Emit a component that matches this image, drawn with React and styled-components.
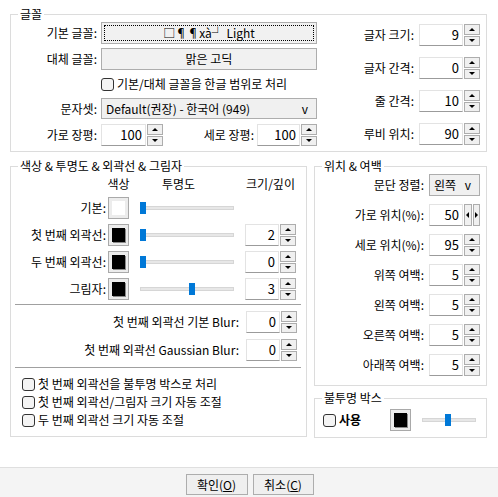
import React from "react";
import styled, { createGlobalStyle } from "styled-components";

const GlobalStyle = createGlobalStyle`
  body {
    margin: 0;
    background: #fff;
  }
`;

const Page = styled.div`
  width: 498px;
  height: 497px;
  display: flex;
  flex-direction: column;
  background: #fff;
  color: #000;
  font-family: "Noto Sans CJK KR", "Noto Sans", sans-serif;
  font-size: 12px;
  line-height: 14px;
  overflow: hidden;
`;

const Main = styled.div`
  flex: 1;
  display: flex;
  flex-direction: column;
  gap: 7px;
  padding: 7px 11px 0 10px;
`;

const Group = styled.fieldset`
  margin: 0;
  padding: 0;
  border: 1px solid #dcdcdc;
  min-width: 0;
  width: ${(p) => p.$w}px;
  box-sizing: border-box;
`;

const Legend = styled.legend`
  margin-left: 7px;
  padding: 0 2px;
  line-height: 14px;
  font-size: 12px;
`;

const Label = styled.span`
  justify-self: end;
  text-align: right;
  white-space: nowrap;
  align-self: center;
`;

/* ---------- controls ---------- */

const PushButton = styled.div`
  position: relative;
  height: 22px;
  box-sizing: border-box;
  border: 1px solid #adadad;
  background: #f1f1f1;
  display: flex;
  align-items: center;
  justify-content: center;
  white-space: nowrap;

  ${(p) =>
    p.$focused &&
    `
    &::after {
      content: "";
      position: absolute;
      inset: 2px;
      border: 1px dotted #000;
    }
  `}
`;

const Combo = styled.div`
  height: ${(p) => p.$h || 22}px;
  box-sizing: border-box;
  border: 1px solid #adadad;
  background: #f0f0f0;
  display: flex;
  align-items: center;
  justify-content: space-between;
  padding: 0 8px 0 4px;
  white-space: nowrap;
`;

const SpinWrap = styled.div`
  display: flex;
  gap: 1px;
  width: ${(p) => p.$w}px;
  height: 22px;
`;

const SpinEdit = styled.div`
  flex: 1;
  box-sizing: border-box;
  background: #fff;
  border: 1px solid #e3e3e3;
  border-bottom-color: #9b9b9b;
  text-align: right;
  padding-right: 3px;
  font-size: 13px;
  line-height: 20px;
`;

const SpinBtns = styled.div`
  display: flex;
  flex-direction: ${(p) => (p.$horizontal ? "row" : "column")};
  gap: 1px;
  width: 16px;
`;

const SpinBtn = styled.div`
  flex: 1;
  box-sizing: border-box;
  border: 1px solid #adadad;
  background: #f0f0f0;
  display: flex;
  align-items: center;
  justify-content: center;
`;

const Arrow = styled.i`
  width: 0;
  height: 0;
  border: 3px solid transparent;
  ${(p) =>
    ({
      up: "border-bottom: 3px solid #000; border-top-width: 0;",
      down: "border-top: 3px solid #000; border-bottom-width: 0;",
      left: "border-right: 3px solid #000; border-left-width: 0;",
      right: "border-left: 3px solid #000; border-right-width: 0;",
    })[p.$dir]}
`;

const Spin = ({ value, w, horizontal }) => (
  <SpinWrap $w={w}>
    <SpinEdit>{value}</SpinEdit>
    <SpinBtns $horizontal={horizontal}>
      <SpinBtn>
        <Arrow $dir={horizontal ? "left" : "up"} />
      </SpinBtn>
      <SpinBtn>
        <Arrow $dir={horizontal ? "right" : "down"} />
      </SpinBtn>
    </SpinBtns>
  </SpinWrap>
);

const CheckRow = styled.label`
  display: flex;
  align-items: center;
  gap: 3px;
  height: ${(p) => p.$h || 18}px;
  white-space: nowrap;
  font-weight: ${(p) => (p.$bold ? 700 : 400)};
`;

const Box = styled.span`
  width: 13px;
  height: 13px;
  box-sizing: border-box;
  border: 1px solid #333;
  border-radius: 3px;
  background: #f4f4f4;
  flex: none;
`;

const ColorButton = styled.div`
  width: 21px;
  height: 22px;
  box-sizing: border-box;
  border: 1px solid #a9a9a9;
  background: #ececec;
  padding: 3px;
  display: flex;
`;

const Swatch = styled.div`
  flex: 1;
  background: ${(p) => p.$color};
  box-shadow: ${(p) => (p.$color === "#fff" ? "none" : "1px 1px 0 #8a8a8a")};
`;

const SliderWrap = styled.div`
  position: relative;
  width: ${(p) => p.$w}px;
  height: 22px;
  display: flex;
  align-items: center;
`;

const Track = styled.div`
  width: 100%;
  height: 4px;
  box-sizing: border-box;
  background: #e7e7e7;
  border: 1px solid #d6d6d6;
`;

const Thumb = styled.div`
  position: absolute;
  top: 5px;
  width: 6px;
  height: 12px;
  background: #0078d7;
`;

const Slider = ({ w, pos }) => (
  <SliderWrap $w={w}>
    <Track />
    <Thumb style={{ left: pos }} />
  </SliderWrap>
);

/* ---------- font group ---------- */

const FontBody = styled.div`
  display: flex;
  padding: 1px 6px 5px 0;
`;

const FontGrid = styled.div`
  display: grid;
  grid-template-columns: 86px 216px;
  grid-template-rows: 22px 22px 20px 22px 22px;
  column-gap: 4px;
  row-gap: 4px;
`;

const PairRow = styled.div`
  display: flex;
  align-items: center;
  gap: 3px;
`;

const PairLabel = styled.span`
  flex: 1;
  text-align: right;
  white-space: nowrap;
`;

const SizeGrid = styled.div`
  margin-left: auto;
  margin-top: 2px;
  display: grid;
  grid-template-columns: auto 61px;
  grid-auto-rows: 22px;
  column-gap: 5px;
  row-gap: 11px;
`;

/* ---------- color group ---------- */

const Columns = styled.div`
  display: flex;
  gap: 7px;
`;

const SideColumn = styled.div`
  display: flex;
  flex-direction: column;
  gap: 5px;
`;

const ColorBody = styled.div`
  padding: 3px 0 6px 0;
  display: flex;
  flex-direction: column;
`;

const ColorGrid = styled.div`
  display: grid;
  grid-template-columns: 86px 21px 94px 51px;
  grid-template-rows: 16px repeat(4, 22px);
  column-gap: 11px;
  row-gap: 5px;
  & > ${Label} {
    margin-right: -9px;
  }
`;

const HeadCell = styled.span`
  grid-column: ${(p) => p.$col};
  justify-self: ${(p) => p.$align || "center"};
  padding-left: ${(p) => p.$pl || 0}px;
  white-space: nowrap;
  align-self: center;
`;

const Separator = styled.div`
  height: 1px;
  background: #a0a0a0;
  margin: ${(p) => p.$m};
`;

const BlurRows = styled.div`
  display: flex;
  flex-direction: column;
  gap: 6px;
  padding-right: 9px;
`;

const BlurRow = styled.div`
  display: flex;
  justify-content: flex-end;
  align-items: center;
  gap: 7px;
  height: 22px;
`;

const CheckList = styled.div`
  padding-left: 11px;
  display: flex;
  flex-direction: column;
`;

/* ---------- position group ---------- */

const PosGrid = styled.div`
  display: grid;
  grid-template-columns: 1fr 51px;
  grid-auto-rows: 22px;
  column-gap: 5px;
  row-gap: 8px;
  padding: 1px 6px 9px 0;
  & > :nth-child(2) {
    margin-bottom: -2px;
  }
`;

const OpaqueRow = styled.div`
  display: grid;
  grid-template-columns: 56px 21px 54px;
  column-gap: 11px;
  align-items: center;
  padding: 4px 0 6px 8px;
`;

/* ---------- footer ---------- */

const Footer = styled.div`
  height: 30px;
  box-sizing: border-box;
  border-top: 1px solid #dfdfdf;
  background: #f4f4f4;
  display: flex;
  justify-content: center;
  align-items: flex-start;
  gap: 5px;
  padding-top: 6px;
  padding-left: 1px;
`;

const DialogButton = styled.div`
  width: ${(p) => p.$w}px;
  height: 21px;
  box-sizing: border-box;
  border: 1px solid #adadad;
  background: #efefef;
  display: flex;
  align-items: center;
  justify-content: center;
  u {
    text-decoration: underline;
  }
`;

const sizes = [
  ["글자 크기:", 9],
  ["글자 간격:", 0],
  ["줄 간격:", 10],
  ["루비 위치:", 90],
];

const outlines = [
  { label: "기본:", color: "#fff", pos: 0, size: null },
  { label: "첫 번째 외곽선:", color: "#000", pos: 0, size: 2 },
  { label: "두 번째 외곽선:", color: "#000", pos: 0, size: 0 },
  { label: "그림자:", color: "#000", pos: 49, size: 3 },
];

const margins = [
  ["세로 위치(%):", 95],
  ["위쪽 여백:", 5],
  ["왼쪽 여백:", 5],
  ["오른쪽 여백:", 5],
  ["아래쪽 여백:", 5],
];

const App = () => {
  return (
    <Page>
      <GlobalStyle />
      <Main>
        <Group $w={477}>
          <Legend>글꼴</Legend>
          <FontBody>
            <FontGrid>
              <Label>기본 글꼴:</Label>
              <PushButton $focused>□¶¶xà┘ Light</PushButton>
              <Label>대체 글꼴:</Label>
              <PushButton>맑은 고딕</PushButton>
              <span />
              <CheckRow $h={20}>
                <Box />
                기본/대체 글꼴을 한글 범위로 처리
              </CheckRow>
              <Label>문자셋:</Label>
              <Combo $h={21}>
                <span>Default(권장) - 한국어 (949)</span>
                <span>v</span>
              </Combo>
              <Label>가로 장평:</Label>
              <PairRow>
                <Spin w={62} value={100} />
                <PairLabel>세로 장평:</PairLabel>
                <Spin w={60} value={100} />
              </PairRow>
            </FontGrid>
            <SizeGrid>
              {sizes.map(([label, value]) => (
                <React.Fragment key={label}>
                  <Label>{label}</Label>
                  <Spin w={61} value={value} />
                </React.Fragment>
              ))}
            </SizeGrid>
          </FontBody>
        </Group>

        <Columns>
          <Group $w={297} style={{ height: 278 }}>
            <Legend>색상 &amp; 투명도 &amp; 외곽선 &amp; 그림자</Legend>
            <ColorBody>
              <ColorGrid>
                <span />
                <HeadCell $col={2}>색상</HeadCell>
                <HeadCell $col={3} $align="start" $pl={22}>
                  투명도
                </HeadCell>
                <HeadCell $col={4}>크기/깊이</HeadCell>
                {outlines.map((o) => (
                  <React.Fragment key={o.label}>
                    <Label>{o.label}</Label>
                    <ColorButton>
                      <Swatch $color={o.color} />
                    </ColorButton>
                    <Slider w={94} pos={o.pos} />
                    {o.size === null ? <span /> : <Spin w={51} value={o.size} />}
                  </React.Fragment>
                ))}
              </ColorGrid>
              <Separator $m="4px 5px 6px 4px" />
              <BlurRows>
                <BlurRow>
                  <span>첫 번째 외곽선 기본 Blur:</span>
                  <Spin w={51} value={0} />
                </BlurRow>
                <BlurRow>
                  <span>첫 번째 외곽선 Gaussian Blur:</span>
                  <Spin w={51} value={0} />
                </BlurRow>
              </BlurRows>
              <Separator $m="6px 5px 7px 4px" />
              <CheckList>
                <CheckRow>
                  <Box />첫 번째 외곽선을 불투명 박스로 처리
                </CheckRow>
                <CheckRow>
                  <Box />첫 번째 외곽선/그림자 크기 자동 조절
                </CheckRow>
                <CheckRow>
                  <Box />두 번째 외곽선 크기 자동 조절
                </CheckRow>
              </CheckList>
            </ColorBody>
          </Group>

          <SideColumn>
            <Group $w={173}>
              <Legend>위치 &amp; 여백</Legend>
              <PosGrid>
                <Label>문단 정렬:</Label>
                <Combo>
                  <span>왼쪽</span>
                  <span>v</span>
                </Combo>
                <Label>가로 위치(%):</Label>
                <Spin w={51} value={50} horizontal />
                {margins.map(([label, value]) => (
                  <React.Fragment key={label}>
                    <Label>{label}</Label>
                    <Spin w={51} value={value} />
                  </React.Fragment>
                ))}
              </PosGrid>
            </Group>
            <Group $w={173}>
              <Legend>불투명 박스</Legend>
              <OpaqueRow>
                <CheckRow $h={22} $bold>
                  <Box />
                  사용
                </CheckRow>
                <ColorButton>
                  <Swatch $color="#000" />
                </ColorButton>
                <Slider w={54} pos={23} />
              </OpaqueRow>
            </Group>
          </SideColumn>
        </Columns>
      </Main>

      <Footer>
        <DialogButton $w={62}>
          확인(<u>O</u>)
        </DialogButton>
        <DialogButton $w={61}>
          취소(<u>C</u>)
        </DialogButton>
      </Footer>
    </Page>
  );
};

export default App;
